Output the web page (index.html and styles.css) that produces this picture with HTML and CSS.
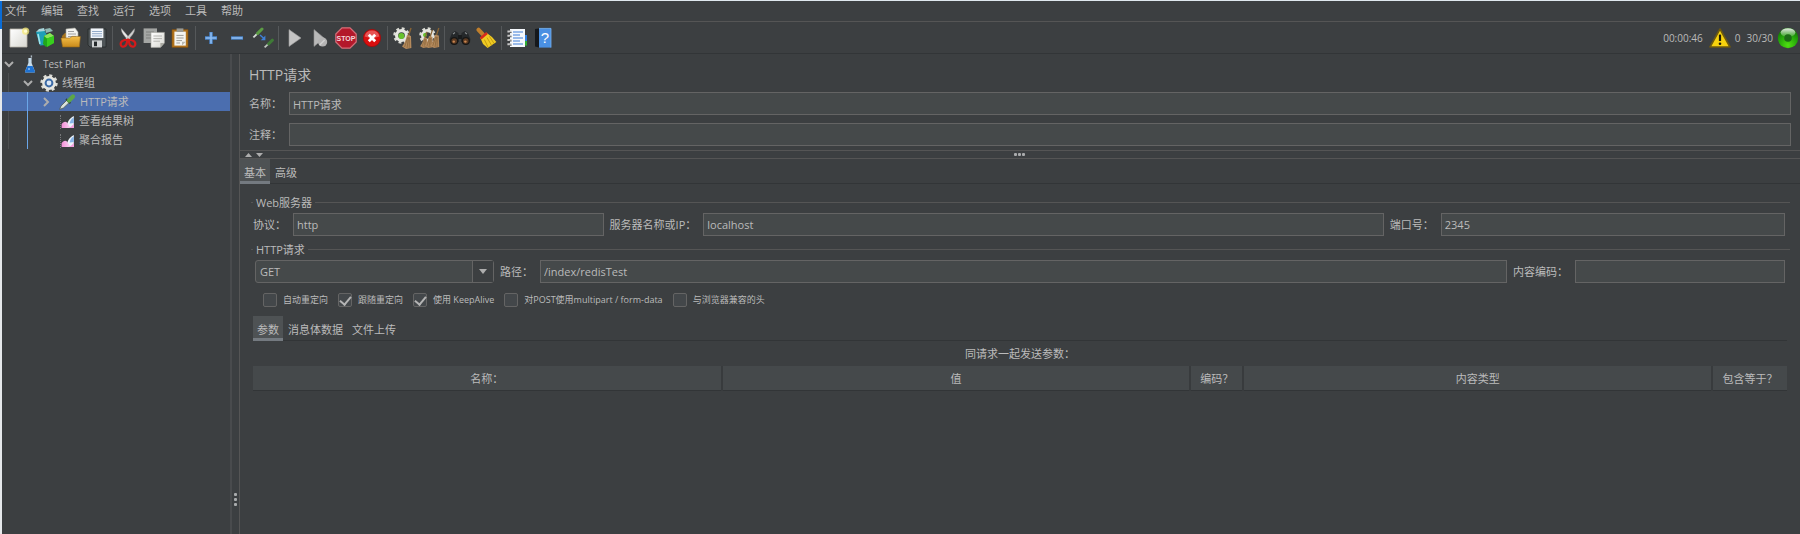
FILE: index.html
```html
<!DOCTYPE html>
<html lang="zh-CN">

<head>
    <meta charset="UTF-8">
    <meta name="viewport" content="width=device-width, initial-scale=1.0">
    <title>HTTP请求 - Test Plan</title>
    <link rel="stylesheet" href="styles.css">
</head>

<body>
    <!-- 公共图形 -->
    <svg class="defs" width="0" height="0" aria-hidden="true">
        <defs>
            <linearGradient id="gold" x1="0" y1="0" x2="0" y2="1">
                <stop offset="0" stop-color="#f5c04a" />
                <stop offset="1" stop-color="#c98a1a" />
            </linearGradient>
            <linearGradient id="paper" x1="0" y1="0" x2="1" y2="1">
                <stop offset="0" stop-color="#ffffff" />
                <stop offset="1" stop-color="#d8d8d2" />
            </linearGradient>
            <linearGradient id="pink" x1="0" y1="0" x2="1" y2="0">
                <stop offset="0" stop-color="#f48fd8" />
                <stop offset="1" stop-color="#fbd8f4" />
            </linearGradient>
            <radialGradient id="green" cx="0.5" cy="0.85" r="0.8">
                <stop offset="0" stop-color="#4fe010" />
                <stop offset="0.6" stop-color="#23a50a" />
                <stop offset="1" stop-color="#137006" />
            </radialGradient>
            <linearGradient id="shine" x1="0" y1="0" x2="0" y2="1">
                <stop offset="0" stop-color="#ffffff" stop-opacity="0.9" />
                <stop offset="1" stop-color="#ffffff" stop-opacity="0.1" />
            </linearGradient>
            <symbol id="cog" viewBox="0 0 18 18">
                <circle cx="9" cy="9" r="7.4" fill="none" stroke="#dcdcd6" stroke-width="2.6" stroke-dasharray="3 2.81" />
                <circle cx="9" cy="9" r="5.2" fill="none" stroke="#e6e6e0" stroke-width="3.4" />
            </symbol>
            <symbol id="whisk" viewBox="0 0 10 22">
                <path d="M9 1 6.4 9" stroke="#8a6434" stroke-width="1.4" />
                <path d="M5 8 9 9 9.4 21 4 22 0 19.6C3 16 4 12 5 8z" fill="#b58a5c" />
                <path d="M5.8 10 2.6 20M6.6 10.4 5 21M7.4 10.4 7.2 21" stroke="#7a5a30" stroke-width="0.6" />
            </symbol>
            <symbol id="chart" viewBox="0 0 14 14">
                <path d="M5.4 13C5.6 8 8 3.6 12.8 1V13z" fill="#eef4fb" />
                <path d="M8.6 8.6C9 6 10.4 3.8 12.8 2.6V8z" fill="#86b4e8" />
                <path d="M0.6 13V9.6C2 6.6 4.6 6 6.2 7.8L9.6 13z" fill="url(#pink)" />
                <path d="M7.6 13C9.6 12 11.6 10.4 12.8 8.4V13z" fill="#f39cdc" />
            </symbol>
        </defs>
    </svg>

    <!-- 菜单栏 -->
    <nav class="menubar">
        <a href="#file">文件</a>
        <a href="#edit">编辑</a>
        <a href="#search">查找</a>
        <a href="#run">运行</a>
        <a href="#options">选项</a>
        <a href="#tools">工具</a>
        <a href="#help">帮助</a>
    </nav>

    <!-- 工具栏 -->
    <div class="toolbar">
        <button type="button" aria-label="新建">
            <svg viewBox="0 0 22 22"><path d="M2 2H19V20H2z" fill="url(#paper)" stroke="#b9b5aa" stroke-width="0.8" /><circle cx="17.6" cy="4.2" r="3.6" fill="#f6e97a" opacity="0.75" /><circle cx="17.6" cy="4.2" r="1.6" fill="#fffbd0" /></svg>
        </button>
        <button type="button" aria-label="模板">
            <svg viewBox="0 0 22 22"><path d="M2 5 10 3 13 8 12 18 6 18.6z" fill="#1f9fb8" /><path d="M2 5 5 2 10 1 11 4z" fill="#a8d6dc" /><path d="M11 2 16 1 19 4 12 6z" fill="#8fb8b4" /><path d="M4 7 6 17" stroke="#9ee4ee" stroke-width="1.6" /><path d="M10 9 16 6 20 9 20 16 12 20 9 17z" fill="#21a81b" /><path d="M10 9 16 6 20 9 13 11.5z" fill="#8fe35c" /><path d="M13 11.5V20L20 16V9z" fill="#38cf1e" /></svg>
        </button>
        <button type="button" aria-label="打开">
            <svg viewBox="0 0 22 22"><path d="M2 9 5 6H18L19 18H3z" fill="#a8741c" /><path d="M6 2 15 1 18 5V12H6z" fill="#f4f4f0" stroke="#a5a59e" stroke-width="0.6" /><path d="M8 4.5H14M8 7H16M8 9.5H16" stroke="#a0a0a0" /><path d="M1 11H10L12 9.4H20.4L19.4 20H2.6z" fill="url(#gold)" stroke="#94661a" stroke-width="0.6" /></svg>
        </button>
        <button type="button" aria-label="保存">
            <svg viewBox="0 0 22 22"><path d="M2 2H20V20H4L2 18z" fill="#4f5558" stroke="#24282a" stroke-width="0.8" /><path d="M4.6 1.4H17.4V11H4.6z" fill="#f2f6fb" /><path d="M6 4.5H16M6 6.7H16M6 9H16" stroke="#93abc9" /><path d="M6 13.4H16V20.4H6z" fill="#cfd2d3" /><path d="M8 14.6H11V19.2H8z" fill="#25292b" /></svg>
        </button>
        <span class="sep"></span>
        <button type="button" aria-label="剪切">
            <svg viewBox="0 0 22 22"><path d="M4.4 1.6C4 5 7 9 12.4 14.6L14 12.8z" fill="#e8e8e8" stroke="#9a9a9a" stroke-width="0.4" /><path d="M17.6 1.6C18 5 15 9 9.6 14.6L8 12.8z" fill="#cfcfcf" stroke="#8a8a8a" stroke-width="0.4" /><path d="M10.6 12.6C6 12.6 3 15 3.8 18 4.6 21 9.6 19.8 9.8 15.6zM11.4 12.6C16 12.6 19 15 18.2 18 17.4 21 12.4 19.8 12.2 15.6z" fill="none" stroke="#d31a1a" stroke-width="2.2" /></svg>
        </button>
        <button type="button" aria-label="复制">
            <svg viewBox="0 0 22 22"><path d="M0.6 1.4H14V16H0.6z" fill="#a4a6a4" /><path d="M3 5H11M3 8H9M3 11H8" stroke="#7e807e" /><path d="M8 5.4H21.4V16L17.4 20.4H8z" fill="url(#paper)" stroke="#a4a49e" stroke-width="0.6" /><path d="M10.4 9H19M10.4 11.6H19M10.4 14.2H17" stroke="#b4b4b0" /><path d="M21.4 16H17.4V20.4z" fill="#a9a9a2" /></svg>
        </button>
        <button type="button" aria-label="粘贴">
            <svg viewBox="0 0 22 22"><path d="M3 2.6H19V20.4H3z" fill="#b0721b" stroke="#7c4e10" stroke-width="0.6" /><path d="M5.4 4.6H16.8V18.6H5.4z" fill="#f4f4f0" /><path d="M7.6 1.4H14.4V5H7.6z" fill="#9b9b94" /><path d="M7.4 8.4H14.6M7.4 11H14.6M7.4 13.6H13M7.4 16H11" stroke="#9d9d98" /><path d="M16.8 14.8H13V18.6z" fill="#b9b9b2" /></svg>
        </button>
        <span class="sep"></span>
        <button type="button" aria-label="全部展开">
            <svg viewBox="0 0 22 22"><path d="M11 5V17M5 11H17" stroke="#4a86cc" stroke-width="3.4" /><path d="M11 5.6V16.4M5.6 11H16.4" stroke="#8dbcf0" stroke-width="1.6" /></svg>
        </button>
        <button type="button" aria-label="全部折叠">
            <svg viewBox="0 0 22 22"><path d="M5 11H17" stroke="#4a86cc" stroke-width="3.4" /><path d="M5.6 11H16.4" stroke="#8dbcf0" stroke-width="1.6" /></svg>
        </button>
        <button type="button" aria-label="切换">
            <svg viewBox="0 0 22 22"><path d="M1.4 10.4 6 6" stroke="#d6dcd6" stroke-width="1.8" /><path d="M5.6 6.4 10 2" stroke="#5c9c45" stroke-width="3" stroke-linecap="round" /><path d="M12.6 20.4 17 16.4" stroke="#c2c8c2" stroke-width="1.8" /><path d="M16.6 16.8 20.4 13.2" stroke="#3f7a37" stroke-width="3" stroke-linecap="round" /><path d="M8 8 12 11.6" stroke="#3f7fd8" stroke-width="1.4" /><path d="M13.4 8.4V13.2H8.8z" fill="#3f7fd8" /></svg>
        </button>
        <span class="sep"></span>
        <button type="button" aria-label="启动">
            <svg viewBox="0 0 22 22"><path d="M6 2.6 18 11 6 19.4z" fill="#c4c4c4" stroke="#9c9c9c" stroke-width="0.6" /></svg>
        </button>
        <button type="button" aria-label="不停顿开始">
            <svg viewBox="0 0 22 22"><path d="M5 2.6 15 11 5 19.4z" fill="#b8b8b8" stroke="#949494" stroke-width="0.6" /><circle cx="13.6" cy="15" r="4.6" fill="#b4b4b4" /><path d="M10.6 18 15.6 13" stroke="#d2d2d2" stroke-width="1.4" /></svg>
        </button>
        <button type="button" aria-label="停止">
            <svg viewBox="0 0 22 22"><path d="M7 0.8H15L21.2 7V15L15 21.2H7L0.8 15V7z" fill="#b3182a" stroke="#d3707a" stroke-width="1.2" /><text x="11" y="14" class="stop-text">STOP</text></svg>
        </button>
        <button type="button" aria-label="关闭">
            <svg viewBox="0 0 22 22"><circle cx="11" cy="11" r="8.6" fill="#d90f0f" stroke="#a40a0a" stroke-width="0.8" /><path d="M3.6 9.4A7.6 7.6 0 0 1 18.4 9.4C14 11 8 11 3.6 9.4z" fill="#f59a9a" opacity="0.5" /><path d="M7.8 7.8 14.2 14.2M14.2 7.8 7.8 14.2" stroke="#fff" stroke-width="2.8" /></svg>
        </button>
        <span class="sep"></span>
        <button type="button" aria-label="清除">
            <svg viewBox="0 0 22 22"><use href="#cog" x="1" y="0" width="17" height="17" /><circle cx="9.4" cy="9" r="3" fill="#67c22c" /><use href="#whisk" x="9" y="0" width="12" height="22" /></svg>
        </button>
        <button type="button" aria-label="清除全部">
            <svg viewBox="0 0 22 22"><use href="#cog" x="1" y="0" width="17" height="17" /><circle cx="7" cy="8" r="2" fill="#67c22c" /><use href="#whisk" x="1" y="4" width="10" height="17" /><use href="#whisk" x="6" y="2" width="10" height="19" /><use href="#whisk" x="12" y="0" width="10" height="21" /></svg>
        </button>
        <span class="sep"></span>
        <button type="button" aria-label="查找">
            <svg viewBox="0 0 22 22"><path d="M3 6 6 4 9.4 6 10 10V15L1 15.6 0.6 12z" fill="#25282a" /><path d="M19 6 16 4 12.6 6 12 10V15L21 15.6 21.4 12z" fill="#25282a" /><path d="M9 8H13V12H9z" fill="#191b1c" /><path d="M4 7 6 5.6M16 5.6 18 7" stroke="#8a8e90" stroke-width="1.2" /><circle cx="5.2" cy="14" r="3.4" fill="#5b3a22" stroke="#151616" stroke-width="1.2" /><circle cx="16.8" cy="14" r="3.4" fill="#5b3a22" stroke="#151616" stroke-width="1.2" /><circle cx="4.8" cy="14.6" r="1.2" fill="#c98650" /><circle cx="16.4" cy="14.6" r="1.2" fill="#c98650" /></svg>
        </button>
        <button type="button" aria-label="重置查找">
            <svg viewBox="0 0 22 22"><path d="M3.6 2.8 7.6 7.2" stroke="#c07f2c" stroke-width="4.2" stroke-linecap="round" /><path d="M5.4 11 11.4 5.8 17 10 21.4 15 12.6 21 8 17z" fill="#f0cb22" /><path d="M9.4 12.6 13 20M12 10.6 16.6 18.4M14.4 9.4 19 16.4" stroke="#b8900c" stroke-width="0.8" /><path d="M5.6 11.4 12 6" stroke="#d62a1c" stroke-width="2.6" /></svg>
        </button>
        <span class="sep"></span>
        <button type="button" aria-label="函数助手">
            <svg viewBox="0 0 22 22"><path d="M17 8H21V14H17z" fill="#2f7fe0" /><path d="M17 14H21V18.6H17z" fill="#2fae34" /><path d="M4 2H19V20H4z" fill="#f6f9fd" /><path d="M7 5H17M7 8H14M7 11H17M7 14H14M7 17H17" stroke="#3f7fd8" stroke-width="1.2" /><path d="M1.4 4.6H5.6M1.4 8.8H5.6M1.4 13H5.6M1.4 17.2H5.6" stroke="#c9c9c9" stroke-width="2" /><path d="M3.6 5.6H5.6M3.6 9.8H5.6M3.6 14H5.6M3.6 18.2H5.6" stroke="#333" stroke-width="0.8" /></svg>
        </button>
        <button type="button" aria-label="帮助">
            <svg viewBox="0 0 22 22"><path d="M3 2 7 1.4V20.6L3 19.4z" fill="#15181c" /><path d="M7 1.4H19V20.6H7z" fill="#4a90e2" /><path d="M7 1.4H19V20.6" fill="none" stroke="#79b2f0" stroke-width="0.8" /><text x="13" y="16" class="help-text">?</text></svg>
        </button>

        <div class="status">
            <span>00:00:46</span>
            <button type="button" aria-label="日志">
                <svg viewBox="0 0 22 22"><path d="M11 2 21 20H1z" fill="#f7d20d" stroke="#6d5a10" stroke-width="1.6" stroke-linejoin="round" /><path d="M11 7.6V14" stroke="#1d1a08" stroke-width="2.2" /><circle cx="11" cy="16.8" r="1.3" fill="#1d1a08" /></svg>
            </button>
            <span>0</span>
            <span class="threads">30/30</span>
            <svg class="lamp" viewBox="0 0 22 22"><circle cx="11" cy="11" r="10.2" fill="url(#green)" /><ellipse cx="11" cy="5.6" rx="7.4" ry="4.4" fill="url(#shine)" /><circle cx="11" cy="11" r="3.8" fill="#1d6b17" /></svg>
        </div>
    </div>

    <div class="workspace">
        <!-- 测试计划树 -->
        <aside class="tree">
            <div class="node level-0">
                <svg class="chevron" viewBox="0 0 10 10"><path d="M1 3 5 7 9 3" /></svg>
                <svg class="node-icon" viewBox="0 0 18 18"><path d="M7.4 3H10.6V8L14 16.4Q14 17.6 12.6 17.6H5.4Q4 17.6 4 16.4L7.4 8z" fill="#c6dbea" /><path d="M10.4 0.4V2.6" stroke="#a9b6c0" stroke-width="1.4" /><path d="M6.4 11H11.6L14 16.4Q14 17.6 12.6 17.6H5.4Q4 17.6 4 16.4z" fill="#1f72d2" /><circle cx="8" cy="14" r="1" fill="#8cc0f8" /></svg>
                <span class="latin">Test Plan</span>
            </div>
            <div class="node level-1">
                <svg class="chevron" viewBox="0 0 10 10"><path d="M1 3 5 7 9 3" /></svg>
                <svg class="node-icon" viewBox="0 0 18 18"><use href="#cog" width="18" height="18" /><circle cx="9" cy="9" r="4.4" fill="#3d6ba6" /><circle cx="9" cy="9" r="2.4" fill="#dce8f6" /></svg>
                <span>线程组</span>
            </div>
            <div class="node level-2 selected">
                <svg class="chevron" viewBox="0 0 10 10"><path d="M3 1 7 5 3 9" /></svg>
                <svg class="node-icon" viewBox="0 0 18 18"><path d="M1.6 16.4 3 13 9 7 11.4 9.4 5.4 15z" fill="#d9e2dc" stroke="#4e5a55" stroke-width="0.8" /><path d="M8 6 12.4 10.4" stroke="#33443a" stroke-width="1.8" /><path d="M11 7.4 15 3.4" stroke="#5da746" stroke-width="4.2" stroke-linecap="round" /></svg>
                <span>HTTP请求</span>
            </div>
            <div class="node leaf">
                <svg class="chart-icon"><use href="#chart" /></svg>
                <span>查看结果树</span>
            </div>
            <div class="node leaf">
                <svg class="chart-icon"><use href="#chart" /></svg>
                <span>聚合报告</span>
            </div>
        </aside>

        <div class="splitter"><i></i><i></i><i></i></div>

        <!-- HTTP请求 -->
        <main class="editor">
            <section class="head">
                <h1>HTTP请求</h1>
                <div class="row">
                    <label for="name">名称：</label>
                    <input id="name" type="text" value="HTTP请求">
                </div>
                <div class="row">
                    <label for="comment">注释：</label>
                    <input id="comment" type="text">
                </div>
            </section>

            <div class="divider">
                <svg class="arrows" viewBox="0 0 18 6"><path d="M0 5 3.5 1 7 5zM11 1H18L14.5 5z" /></svg>
                <span class="dots"><i></i><i></i><i></i></span>
            </div>

            <div class="tabs">
                <button type="button" class="active">基本</button>
                <button type="button">高级</button>
            </div>

            <form class="panel">
                <fieldset>
                    <legend>Web服务器</legend>
                    <div class="row">
                        <label for="protocol">协议：</label>
                        <input id="protocol" type="text" value="http">
                        <label for="server">服务器名称或IP：</label>
                        <input id="server" type="text" value="localhost">
                        <label for="port">端口号：</label>
                        <input id="port" type="text" value="2345">
                    </div>
                </fieldset>

                <fieldset>
                    <legend>HTTP请求</legend>
                    <div class="row request">
                        <div class="combo">
                            <select aria-label="方法">
                                <option>GET</option>
                                <option>POST</option>
                            </select>
                            <span class="combo-arrow"></span>
                        </div>
                        <label for="path">路径：</label>
                        <input id="path" type="text" value="/index/redisTest">
                        <label for="encoding">内容编码：</label>
                        <input id="encoding" type="text">
                    </div>

                    <div class="checks">
                        <label><input type="checkbox">自动重定向</label>
                        <label><input type="checkbox" checked>跟随重定向</label>
                        <label><input type="checkbox" checked>使用 KeepAlive</label>
                        <label><input type="checkbox">对POST使用multipart / form-data</label>
                        <label><input type="checkbox">与浏览器兼容的头</label>
                    </div>

                    <div class="params">
                        <div class="tabs">
                            <button type="button" class="active">参数</button>
                            <button type="button">消息体数据</button>
                            <button type="button">文件上传</button>
                        </div>
                        <table>
                            <caption>同请求一起发送参数：</caption>
                            <thead>
                                <tr>
                                    <th>名称：</th>
                                    <th>值</th>
                                    <th class="col-encode">编码？</th>
                                    <th>内容类型</th>
                                    <th class="col-include">包含等于？</th>
                                </tr>
                            </thead>
                        </table>
                    </div>
                </fieldset>
            </form>
        </main>
    </div>
</body>

</html>
```
FILE: styles.css
```css
:root {
    --bg: #3c3f41;
    --field: #45494a;
    --border: #646464;
    --line: #555555;
    --dark: #323537;
    --text: #bbbbbb;
    --select: #4b6eaf;
    --guide: #4c4f51;
    --guide-active: #6aa6e8;
}

* {
    box-sizing: border-box;
}

body {
    margin: 0;
    min-height: 100vh;
    display: flex;
    flex-direction: column;
    border-top: 1px solid #dfe8ee;
    border-left: 2px solid;
    border-image: linear-gradient(to bottom, #dfe8ee 1px, #0a6cd6 1px, #0a6cd6 29px, #e6e9eb 29px) 1 0 0 2;
    background: var(--bg);
    color: var(--text);
    font: 11px/16px "Open Sans", "Noto Sans CJK SC", sans-serif;
}

button,
input,
select {
    margin: 0;
    color: inherit;
    font: inherit;
}

.defs {
    position: absolute;
}

/* 菜单栏 */
.menubar {
    display: flex;
    gap: 14px;
    height: 21px;
    padding: 2px 3px 0;
    border-bottom: 1px solid var(--line);
}

.menubar a {
    color: inherit;
    text-decoration: none;
}

/* 工具栏 */
.toolbar {
    display: flex;
    align-items: center;
    height: 32px;
    padding-left: 4px;
    border-bottom: 1px solid var(--dark);
}

.toolbar button {
    width: 26px;
    height: 26px;
    padding: 2px;
    border: 0;
    background: none;
}

.toolbar svg {
    display: block;
    width: 22px;
    height: 22px;
}

.sep {
    width: 1px;
    height: 24px;
    margin: 0 2px;
    background: #55585a;
}

.stop-text {
    font: bold 7px "Liberation Sans", sans-serif;
    fill: #f3d6d8;
    text-anchor: middle;
}

.help-text {
    font: 15px "Liberation Sans", sans-serif;
    fill: #fff;
    text-anchor: middle;
}

.status {
    display: flex;
    align-items: center;
    margin-left: auto;
    padding-right: 1px;
    font-size: 10px;
}

.status button {
    margin: 0 2px 0 4px;
}

.threads {
    margin: 0 4px 0 6px;
}

/* 测试计划树 */
.workspace {
    display: flex;
    flex: 1;
}

.tree {
    width: 230px;
    border-right: 2px solid #494b4d;
}

.node {
    display: flex;
    align-items: center;
    height: 19px;
}

.level-0 {
    padding-left: 2px;
}

.level-1 {
    padding-left: 21px;
    background: linear-gradient(var(--guide), var(--guide)) 6px 0 / 1px 100% no-repeat;
}

.level-2 {
    padding-left: 39px;
}

.leaf {
    padding-left: 58px;
    background:
        linear-gradient(var(--guide), var(--guide)) 6px 0 / 1px 100% no-repeat,
        linear-gradient(var(--guide-active), var(--guide-active)) 25px 0 / 1px 100% no-repeat;
}

.selected {
    background: linear-gradient(var(--guide-active), var(--guide-active)) 25px 0 / 1px 100% no-repeat var(--select);
}

.chevron {
    width: 10px;
    height: 10px;
    margin-right: 7px;
    fill: none;
    stroke: #adadad;
    stroke-width: 2;
}

.node-icon {
    width: 18px;
    height: 18px;
    margin-right: 4px;
}

.chart-icon {
    width: 15px;
    height: 14px;
    margin: 2px 4px 0 0;
    border-left: 1px dotted #77797b;
}

.latin {
    font-size: 10px;
}

.splitter {
    display: flex;
    flex-direction: column;
    align-items: center;
    justify-content: flex-end;
    gap: 2px;
    width: 8px;
    padding-bottom: 28px;
    border-right: 1px solid var(--line);
}

.splitter i,
.dots i {
    width: 3px;
    height: 3px;
    border-radius: 1px;
    background: #a9abac;
}

/* 编辑区 */
.editor {
    flex: 1;
    min-width: 0;
}

.head {
    display: flex;
    flex-direction: column;
    gap: 8px;
    padding: 11px 9px 4px;
}

.head h1 {
    margin: 0;
    font-size: 14px;
    font-weight: 400;
    line-height: 19px;
}

.row {
    display: flex;
    align-items: center;
    gap: 6px;
}

.row label {
    margin-right: 1px;
    white-space: nowrap;
}

.row input {
    flex: 1;
    min-width: 0;
    height: 23px;
    padding: 0 3px;
    border: 1px solid var(--border);
    border-radius: 0;
    background: var(--field);
    outline: 0;
}

.divider {
    position: relative;
    height: 9px;
    border: solid var(--line);
    border-width: 1px 0;
}

.arrows {
    display: block;
    width: 18px;
    height: 6px;
    margin: 1px 0 0 5px;
    fill: #adadad;
}

.dots {
    position: absolute;
    top: 2px;
    left: 50%;
    display: flex;
    gap: 1px;
    margin-left: -6px;
}

.tabs {
    display: flex;
    gap: 1px;
    height: 25px;
    border-bottom: 1px solid var(--dark);
}

.tabs button {
    height: 25px;
    padding: 5px 4px 0;
    border: 0;
    border-bottom: 3px solid transparent;
    background: none;
}

.tabs .active {
    border-color: #747a80;
    background: #4e5254;
}

.panel {
    padding: 10px 10px 0 11px;
}

fieldset {
    min-width: 0;
    margin: 0;
    padding: 2px 3px 5px 2px;
    border: 0 solid var(--line);
    border-top-width: 1px;
}

legend {
    padding: 0 3px;
    line-height: 17px;
}

fieldset .row {
    padding-right: 2px;
}

#protocol {
    flex-grow: 9;
}

#server {
    flex-grow: 20;
}

#port {
    flex-grow: 10;
}

.request {
    padding-left: 2px;
}

#path {
    flex-grow: 19;
}

#encoding {
    flex-grow: 4;
}

.combo {
    position: relative;
    width: 239px;
    height: 23px;
}

.combo select {
    width: 100%;
    height: 100%;
    padding: 0 4px;
    border: 1px solid var(--border);
    border-radius: 3px;
    background: var(--field);
    appearance: none;
    outline: 0;
}

.combo-arrow {
    position: absolute;
    top: 1px;
    right: 1px;
    bottom: 1px;
    display: flex;
    align-items: center;
    justify-content: center;
    width: 21px;
    border-left: 1px solid var(--border);
    background: var(--bg);
    pointer-events: none;
}

.combo-arrow::after {
    content: "";
    border: solid transparent;
    border-width: 5px 4px 0;
    border-top-color: #adadad;
}

.checks {
    display: flex;
    gap: 10px;
    padding: 10px 10px 9px;
    font-size: 9px;
    line-height: 14px;
}

.checks label {
    display: flex;
    align-items: center;
    gap: 6px;
}

.checks input {
    display: flex;
    justify-content: center;
    width: 14px;
    height: 14px;
    border: 1px solid var(--border);
    border-radius: 2px;
    background: #43474a;
    appearance: none;
}

.checks input:checked::before {
    content: "";
    width: 5px;
    height: 9px;
    border: solid #b4b4b4;
    border-width: 0 2px 2px 0;
    transform: rotate(40deg);
}

table {
    width: 100%;
    table-layout: fixed;
    border-collapse: collapse;
}

caption {
    padding: 5px 0 4px;
}

th {
    height: 24px;
    padding: 2px 0 0;
    border-right: 2px solid #383b3d;
    border-bottom: 1px solid var(--dark);
    background: #45494b;
    font-weight: 400;
}

th:last-child {
    border-right: 0;
}

.col-encode {
    width: 53px;
}

.col-include {
    width: 75px;
}
```
